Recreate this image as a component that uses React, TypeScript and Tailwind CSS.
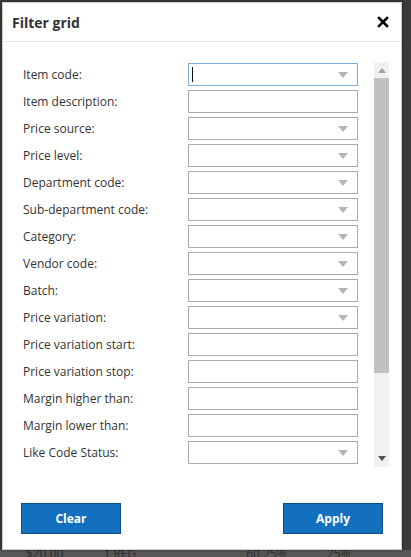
import React from "react";

type Field = { label: string; kind: "select" | "text"; focused?: boolean };

const fields: Field[] = [
  { label: "Item code:", kind: "select", focused: true },
  { label: "Item description:", kind: "text" },
  { label: "Price source:", kind: "select" },
  { label: "Price level:", kind: "select" },
  { label: "Department code:", kind: "select" },
  { label: "Sub-department code:", kind: "select" },
  { label: "Category:", kind: "select" },
  { label: "Vendor code:", kind: "select" },
  { label: "Batch:", kind: "select" },
  { label: "Price variation:", kind: "select" },
  { label: "Price variation start:", kind: "text" },
  { label: "Price variation stop:", kind: "text" },
  { label: "Margin higher than:", kind: "text" },
  { label: "Margin lower than:", kind: "text" },
  { label: "Like Code Status:", kind: "select" },
  { label: "Like Code:", kind: "text" },
];

function Caret() {
  return (
    <svg width="10" height="6" viewBox="0 0 10 6" className="shrink-0">
      <path d="M0 0 L10 0 L5 6 Z" fill="#b5b5b5" />
    </svg>
  );
}

function FieldRow({ field }: { field: Field }) {
  return (
    <div className="flex items-center h-[23px] mb-[4px]">
      <div className="w-[165px] shrink-0 text-[12px] text-[#333] leading-none">{field.label}</div>
      <div
        className={
          "w-[170px] h-[23px] shrink-0 bg-white flex items-center pl-[3px] pr-[9px] " +
          (field.focused ? "border border-[#7eaee0]" : "border border-[#ababab]")
        }
      >
        {field.focused && <div className="w-px h-[15px] bg-[#111]" />}
        <div className="flex-1" />
        {field.kind === "select" && <Caret />}
      </div>
    </div>
  );
}

function Scrollbar() {
  return (
    <div className="w-[15px] h-full bg-[#f1f1f1] flex flex-col items-center">
      <div className="h-[16px] flex items-center justify-center">
        <svg width="8" height="5" viewBox="0 0 8 5">
          <path d="M0 5 L8 5 L4 0 Z" fill="#a3a3a3" />
        </svg>
      </div>
      <div className="w-[15px] h-[295px] bg-[#c1c1c1]" />
      <div className="flex-1" />
      <div className="h-[18px] flex items-center justify-center">
        <svg width="8" height="5" viewBox="0 0 8 5">
          <path d="M0 0 L8 0 L4 5 Z" fill="#505050" />
        </svg>
      </div>
    </div>
  );
}

export default function App() {
  return (
    <div
      className="relative w-[411px] h-[557px] overflow-hidden bg-[#3c3c3c] flex flex-col"
      style={{ fontFamily: '"Open Sans", "Noto Sans", sans-serif' }}
    >
      {/* grid behind the overlay */}
      <div className="flex-1" />
      <div className="h-[7px] bg-[#585858] flex items-center gap-[40px] pl-[26px] text-[12px] text-[#2d2d2d] overflow-hidden">
        <span>$20.00</span>
        <span>1 REG</span>
        <span className="ml-[70px]">60.25%</span>
        <span>25%</span>
      </div>

      {/* dialog */}
      <div className="absolute left-[2px] top-[2px] w-[400px] h-[548px] bg-white border border-[#cfcfcf] flex flex-col shadow-[0_0_4px_rgba(0,0,0,0.4)]">
        <div className="h-[39px] flex items-center justify-between pl-[9px] pr-[12px] border-b border-[#e5e5e5] shrink-0">
          <span className="text-[14px] font-bold text-[#333]">Filter grid</span>
          <svg width="12" height="12" viewBox="0 0 12 12">
            <path d="M2 2 L10 10 M10 2 L2 10" stroke="#000" strokeWidth="2.6" strokeLinecap="square" />
          </svg>
        </div>

        <div className="flex pl-[20px] pt-[20px] shrink-0">
          <div className="h-[406px] flex-1 overflow-hidden pt-[1px]">
            {fields.map((f) => (
              <FieldRow key={f.label} field={f} />
            ))}
          </div>
          <div className="w-[15px] h-[405px] ml-[13px] mr-[12px]">
            <Scrollbar />
          </div>
        </div>

        <div className="flex justify-between px-[18px] mt-[35px]">
          <button className="w-[100px] h-[31px] bg-[#1270be] border border-[#0b4f8a] text-white text-[12px] font-bold">
            Clear
          </button>
          <button className="w-[100px] h-[31px] bg-[#1270be] border border-[#0b4f8a] text-white text-[12px] font-bold">
            Apply
          </button>
        </div>
      </div>
    </div>
  );
}
